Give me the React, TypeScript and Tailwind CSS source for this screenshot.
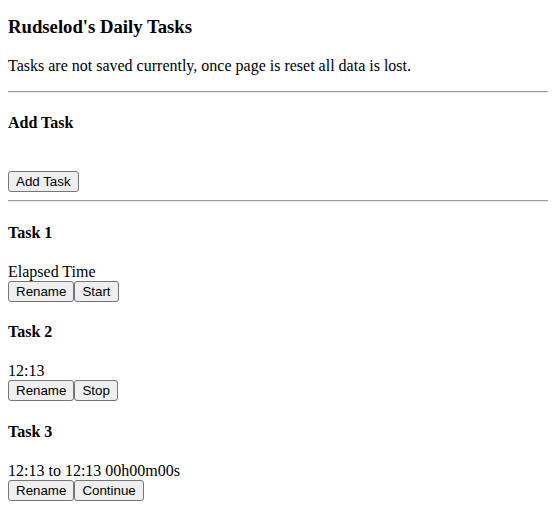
const tasks = [
  { name: "Task 1", info: "Elapsed Time", action: "Start" },
  { name: "Task 2", info: "12:13", action: "Stop" },
  { name: "Task 3", info: "12:13 to 12:13 00h00m00s", action: "Continue" },
];

function Btn({ children }: { children: React.ReactNode }) {
  return (
    <button className="rounded-[3px] border border-[#767676] bg-[#efefef] px-[7px] py-[2px] font-['Liberation_Sans',Arial,sans-serif] text-[13.333px] leading-[normal] text-black">
      {children}
    </button>
  );
}

function Rule() {
  return <hr className="my-2 border-t border-b border-t-[#9a9a9a] border-b-[#eeeeee]" />;
}

export default function App() {
  return (
    <div className="bg-white px-2 pb-2 font-['Liberation_Serif','Times_New_Roman',serif] text-[16px] leading-[normal] text-black">
      <h3 className="mt-4 mb-[18.72px] text-[18.72px] font-bold">Rudselod's Daily Tasks</h3>
      <p className="mb-4">Tasks are not saved currently, once page is reset all data is lost.</p>
      <Rule />
      <h4 className="my-[21.28px] font-bold">Add Task</h4>
      <div>&nbsp;</div>
      <div>
        <Btn>Add Task</Btn>
      </div>
      <Rule />
      {tasks.map((t) => (
        <div key={t.name}>
          <h4 className="my-[21.28px] font-bold">{t.name}</h4>
          <div>{t.info}</div>
          <div>
            <Btn>Rename</Btn>
            <Btn>{t.action}</Btn>
          </div>
        </div>
      ))}
    </div>
  );
}
